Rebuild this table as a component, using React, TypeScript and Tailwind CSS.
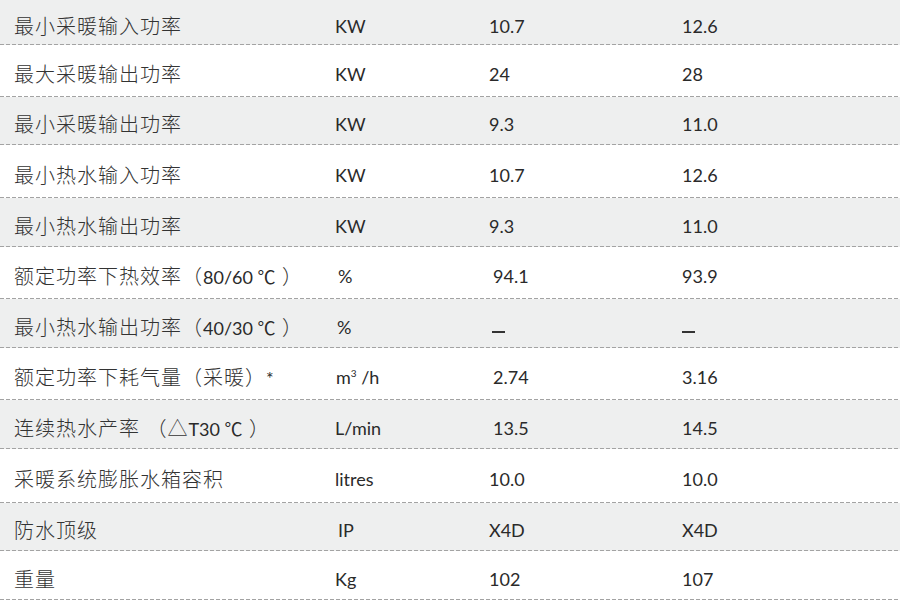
import React from "react";

type Row = {
  label: React.ReactNode;
  unit: React.ReactNode;
  a: string;
  b: string;
  h: string;
  unitPad?: string;
  aPad?: string;
  bPad?: string;
};

const Lat = ({ children }: { children: React.ReactNode }) => (
  <span className="font-normal tracking-normal text-[18px] text-[#2a2a2a]">{children}</span>
);

const ROWS: Row[] = [
  { label: "最小采暖输入功率", unit: "KW", a: "10.7", b: "12.6", h: "h-[45px]" },
  { label: "最大采暖输出功率", unit: "KW", a: "24", b: "28", h: "h-[52px]" },
  { label: "最小采暖输出功率", unit: "KW", a: "9.3", b: "11.0", h: "h-[48px]" },
  { label: "最小热水输入功率", unit: "KW", a: "10.7", b: "12.6", h: "h-[53px]" },
  { label: "最小热水输出功率", unit: "KW", a: "9.3", b: "11.0", h: "h-[49px]" },
  {
    label: (
      <>
        额定功率下热效率（<Lat>80/60 ℃</Lat> ）
      </>
    ),
    unit: "%",
    a: "94.1",
    b: "93.9",
    h: "h-[52px]",
    unitPad: "pl-[3px]",
    aPad: "pl-[6px]",
  },
  {
    label: (
      <>
        最小热水输出功率（<Lat>40/30 ℃</Lat> ）
      </>
    ),
    unit: "%",
    a: "–",
    b: "–",
    h: "h-[49px]",
    unitPad: "pl-[2px]",
    aPad: "pl-[5px]",
  },
  {
    label: (
      <>
        额定功率下耗气量（采暖）<Lat>*</Lat>
      </>
    ),
    unit: (
      <>
        m<sup className="text-[10px] -top-[7px]">3</sup> /h
      </>
    ),
    a: "2.74",
    b: "3.16",
    h: "h-[52px]",
    unitPad: "pl-[1px]",
    aPad: "pl-[6px]",
  },
  {
    label: (
      <>
        连续热水产率 （△<Lat>T30 ℃</Lat> ）
      </>
    ),
    unit: "L/min",
    a: "13.5",
    b: "14.5",
    h: "h-[49px]",
    aPad: "pl-[6px]",
  },
  { label: "采暖系统膨胀水箱容积", unit: "litres", a: "10.0", b: "10.0", h: "h-[54px]" },
  {
    label: "防水顶级",
    unit: "IP",
    a: "X4D",
    b: "X4D",
    h: "h-[48px]",
    unitPad: "pl-[3px]",
  },
  { label: "重量", unit: "Kg", a: "102", b: "107", h: "h-[49px]" },
];

const Dash = () => (
  <span className="inline-block w-[13px] h-[1.5px] bg-[#333] align-middle translate-y-[3px]" />
);

export default function App() {
  return (
    <div
      className="w-[900px] h-[605px] bg-white text-[#2a2a2a] overflow-hidden"
      style={{ fontFamily: '"Lato", "Noto Sans CJK SC", sans-serif' }}
    >
      {ROWS.map((r, i) => (
        <div key={i} className={`${r.h} flex flex-col ${i % 2 === 0 ? "bg-[#eeefef]" : "bg-white"}`}>
          <div className="flex-1 grid grid-cols-[335px_152px_193px_1fr] items-center pt-[7px] text-[18px] leading-none">
            <div className="pl-[14px] text-[20px] tracking-[1px] font-light text-[#333]">{r.label}</div>
            <div className={r.unitPad ?? ""}>{r.unit}</div>
            <div className={r.aPad ?? "pl-[2px]"}>{r.a === "–" ? <Dash /> : r.a}</div>
            <div className={r.bPad ?? "pl-[2px]"}>{r.b === "–" ? <Dash /> : r.b}</div>
          </div>
          <div className="h-px bg-[repeating-linear-gradient(to_right,#a3a3a3_0_4px,transparent_4px_6px)]" />
        </div>
      ))}
    </div>
  );
}
